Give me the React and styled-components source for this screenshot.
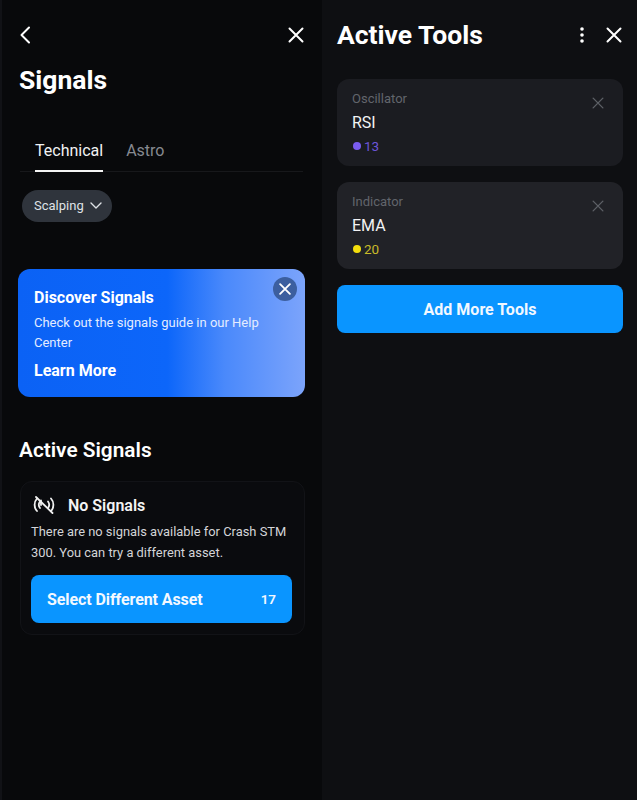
import React from "react";
import styled, { createGlobalStyle } from "styled-components";

const Global = createGlobalStyle`
  html, body { margin: 0; padding: 0; background: #08090c; }
  body { font-family: Roboto, "Liberation Sans", sans-serif; }
  * { box-sizing: border-box; }
`;

const Page = styled.div`
  width: 637px;
  height: 800px;
  display: flex;
  overflow: hidden;
  background: #08090c;
  color: #fff;
`;

const LeftPanel = styled.section`
  width: 322px;
  height: 800px;
  padding: 0 18px 0 16px;
  border-left: 2px solid #111216;
  background: #08090b;
  display: flex;
  flex-direction: column;
`;

const RightPanel = styled.section`
  width: 315px;
  height: 800px;
  padding: 0 14px 0 15px;
  background: #0e0f12;
  display: flex;
  flex-direction: column;
`;

const TopBar = styled.div`
  height: 35px;
  margin-top: 17px;
  padding-left: 1px;
  display: flex;
  align-items: center;
  justify-content: space-between;
`;

const IconBtn = styled.span`
  display: inline-flex;
  align-items: center;
  justify-content: center;
  color: ${(p) => p.$color || "#fff"};
`;

const Title = styled.h1`
  margin: 12px 0 0 1px;
  font-size: 26.5px;
  line-height: 32px;
  font-weight: 700;
  color: #fff;
`;

const Tabs = styled.div`
  margin: 39px 1px 0 2px;
  padding-left: 15px;
  height: 37px;
  display: flex;
  gap: 23px;
  border-bottom: 1px solid #17181b;
`;

const Tab = styled.div`
  height: 37px;
  padding-top: 6px;
  font-size: 16px;
  line-height: 20px;
  color: ${(p) => (p.$active ? "#f1f2f3" : "#868991")};
  border-bottom: 2px solid ${(p) => (p.$active ? "#f4f4f4" : "transparent")};
`;

const Chip = styled.div`
  align-self: flex-start;
  margin: 18px 0 0 4px;
  width: 90px;
  height: 32px;
  border-radius: 16px;
  background: #2f343c;
  color: #dfe2e6;
  font-size: 13px;
  line-height: 30px;
  display: flex;
  align-items: center;
  gap: 6px;
  padding: 0 0 1px 12px;
`;

const Banner = styled.div`
  position: relative;
  margin-top: 47px;
  width: 287px;
  height: 128px;
  border-radius: 12px;
  padding: 19px 16px 0;
  background: linear-gradient(90deg, #0b62f5 0%, #0c66fa 52%, #4a89fb 72%, #7ca4fb 100%);
`;

const BannerClose = styled.span`
  position: absolute;
  top: 8px;
  right: 8px;
  width: 24px;
  height: 24px;
  border-radius: 50%;
  background: #3c5f9f;
  display: flex;
  align-items: center;
  justify-content: center;
`;

const BannerTitle = styled.div`
  font-size: 16px;
  line-height: 20px;
  font-weight: 700;
`;

const BannerText = styled.div`
  margin-top: 5px;
  font-size: 13px;
  line-height: 20px;
  color: #e4ecff;
  width: 250px;
`;

const BannerLink = styled.div`
  margin-top: 8px;
  font-size: 16px;
  line-height: 20px;
  font-weight: 700;
`;

const SectionTitle = styled.h2`
  margin: 39px 0 0 1px;
  font-size: 20.8px;
  line-height: 28px;
  font-weight: 600;
`;

const SignalCard = styled.div`
  margin: 17px 0 0 2px;
  width: 285px;
  height: 154px;
  border-radius: 12px;
  border: 1px solid #121317;
  background: #0a0b0e;
  padding: 11px 12px 0 10px;
`;

const SignalHead = styled.div`
  display: flex;
  align-items: center;
  gap: 13px;
  padding-left: 2px;
  height: 24px;
`;

const SignalTitle = styled.div`
  font-size: 16px;
  font-weight: 600;
  color: #f4f4f4;
`;

const SignalText = styled.div`
  margin-top: 4px;
  font-size: 12.9px;
  line-height: 21px;
  color: #d4d5d8;
`;

const PrimaryRow = styled.div`
  margin-top: 12px;
  height: 48px;
  border-radius: 8px;
  background: #0a95ff;
  display: flex;
  align-items: center;
  justify-content: space-between;
  padding: 0 16px;
  font-size: 16px;
  letter-spacing: -0.09px;
  font-weight: 700;
  color: #f2f8ff;
`;

const Count = styled.span`
  font-size: 13.5px;
  font-weight: 600;
`;

const ToolsHead = styled.div`
  height: 35px;
  margin-top: 17px;
  display: flex;
  align-items: center;
`;

const ToolsTitle = styled.h1`
  margin: 0;
  flex: 1;
  font-size: 26.5px;
  font-weight: 700;
  color: #fff;
`;

const HeadIcons = styled.div`
  display: flex;
  align-items: center;
  gap: 22px;
  margin-right: 1px;
`;

const ToolList = styled.div`
  margin-top: 27px;
  width: 286px;
  display: flex;
  flex-direction: column;
  gap: 16px;
`;

const ToolCard = styled.div`
  position: relative;
  height: 87px;
  border-radius: 12px;
  background: ${(p) => p.$bg};
  padding: 12px 15px 0;
`;

const ToolKind = styled.div`
  font-size: 13px;
  line-height: 15px;
  color: #62656c;
`;

const ToolName = styled.div`
  margin-top: 6px;
  font-size: 16px;
  line-height: 21px;
  color: #f2f3f4;
`;

const ToolValue = styled.div`
  margin-top: 5px;
  display: flex;
  align-items: center;
  gap: 3px;
  font-size: 13.5px;
  line-height: 16px;
  color: ${(p) => p.$color};
`;

const Dot = styled.span`
  width: 8px;
  height: 8px;
  border-radius: 50%;
  margin-left: 1px;
  background: ${(p) => p.$color};
`;

const ToolClose = styled.span`
  position: absolute;
  top: 18px;
  right: 19px;
  display: flex;
  color: #5d6066;
`;

const AddButton = styled.div`
  margin-top: 16px;
  width: 286px;
  height: 48px;
  border-radius: 8px;
  background: #0a95ff;
  display: flex;
  align-items: center;
  justify-content: center;
  font-size: 16px;
  font-weight: 700;
  color: #f2f8ff;
`;

const X = ({ size = 16, width = 2, color = "currentColor" }) => (
  <svg width={size} height={size} viewBox="0 0 16 16" fill="none" stroke={color} strokeWidth={width} strokeLinecap="round">
    <path d="M1.5 1.5L14.5 14.5M14.5 1.5L1.5 14.5" />
  </svg>
);

const Back = () => (
  <svg width="12" height="18" viewBox="0 0 12 18" fill="none" stroke="#fff" strokeWidth="2" strokeLinecap="round" strokeLinejoin="round">
    <path d="M10 1.500L2.500 9L10 16.500" />
  </svg>
);

const Chevron = () => (
  <svg width="12" height="7" viewBox="0 0 12 7" fill="none" stroke="#dfe2e6" strokeWidth="1.4" strokeLinecap="round" strokeLinejoin="round">
    <path d="M1 1L6 6L11 1" />
  </svg>
);

const Dots = () => (
  <svg width="4" height="16" viewBox="0 0 4 16" fill="#fff">
    <circle cx="2" cy="2" r="1.800" />
    <circle cx="2" cy="8" r="1.800" />
    <circle cx="2" cy="14" r="1.800" />
  </svg>
);

const NoSignal = () => (
  <svg width="22" height="18" viewBox="0 0 22 18" fill="none" stroke="#f0f0f0" strokeWidth="1.800" strokeLinecap="round" strokeLinejoin="round">
    <path d="M4 2.500C.8 6 .8 11.500 4 15" />
    <path d="M7 5.500C5.500 7.500 5.500 10 7 12" />
    <path d="M18 15c3.200-3.500 3.200-9 0-12.500" />
    <path d="M15 12c1.500-2 1.500-4.500 0-6.500" />
    <path d="M3 1L19.500 17" />
    <path d="M8 4.500L8 9" />
  </svg>
);

export default function App() {
  return (
    <Page>
      <Global />
      <LeftPanel>
        <TopBar>
          <IconBtn><Back /></IconBtn>
          <IconBtn><X /></IconBtn>
        </TopBar>
        <Title>Signals</Title>
        <Tabs>
          <Tab $active>Technical</Tab>
          <Tab>Astro</Tab>
        </Tabs>
        <Chip>Scalping <Chevron /></Chip>
        <Banner>
          <BannerClose><X size={12} width={2.4} color="#fff" /></BannerClose>
          <BannerTitle>Discover Signals</BannerTitle>
          <BannerText>Check out the signals guide in our Help Center</BannerText>
          <BannerLink>Learn More</BannerLink>
        </Banner>
        <SectionTitle>Active Signals</SectionTitle>
        <SignalCard>
          <SignalHead>
            <NoSignal />
            <SignalTitle>No Signals</SignalTitle>
          </SignalHead>
          <SignalText>There are no signals available for Crash STM 300. You can try a different asset.</SignalText>
          <PrimaryRow>
            <span>Select Different Asset</span>
            <Count>17</Count>
          </PrimaryRow>
        </SignalCard>
      </LeftPanel>
      <RightPanel>
        <ToolsHead>
          <ToolsTitle>Active Tools</ToolsTitle>
          <HeadIcons>
            <IconBtn><Dots /></IconBtn>
            <IconBtn><X /></IconBtn>
          </HeadIcons>
        </ToolsHead>
        <ToolList>
          <ToolCard $bg="#1b1c21">
            <ToolKind>Oscillator</ToolKind>
            <ToolName>RSI</ToolName>
            <ToolValue $color="#6d55d8"><Dot $color="#7a5cf0" />13</ToolValue>
            <ToolClose><X size={12} width={1.8} /></ToolClose>
          </ToolCard>
          <ToolCard $bg="#212227">
            <ToolKind>Indicator</ToolKind>
            <ToolName>EMA</ToolName>
            <ToolValue $color="#c9bb2a"><Dot $color="#f4de0c" />20</ToolValue>
            <ToolClose><X size={12} width={1.8} /></ToolClose>
          </ToolCard>
        </ToolList>
        <AddButton>Add More Tools</AddButton>
      </RightPanel>
    </Page>
  );
}
